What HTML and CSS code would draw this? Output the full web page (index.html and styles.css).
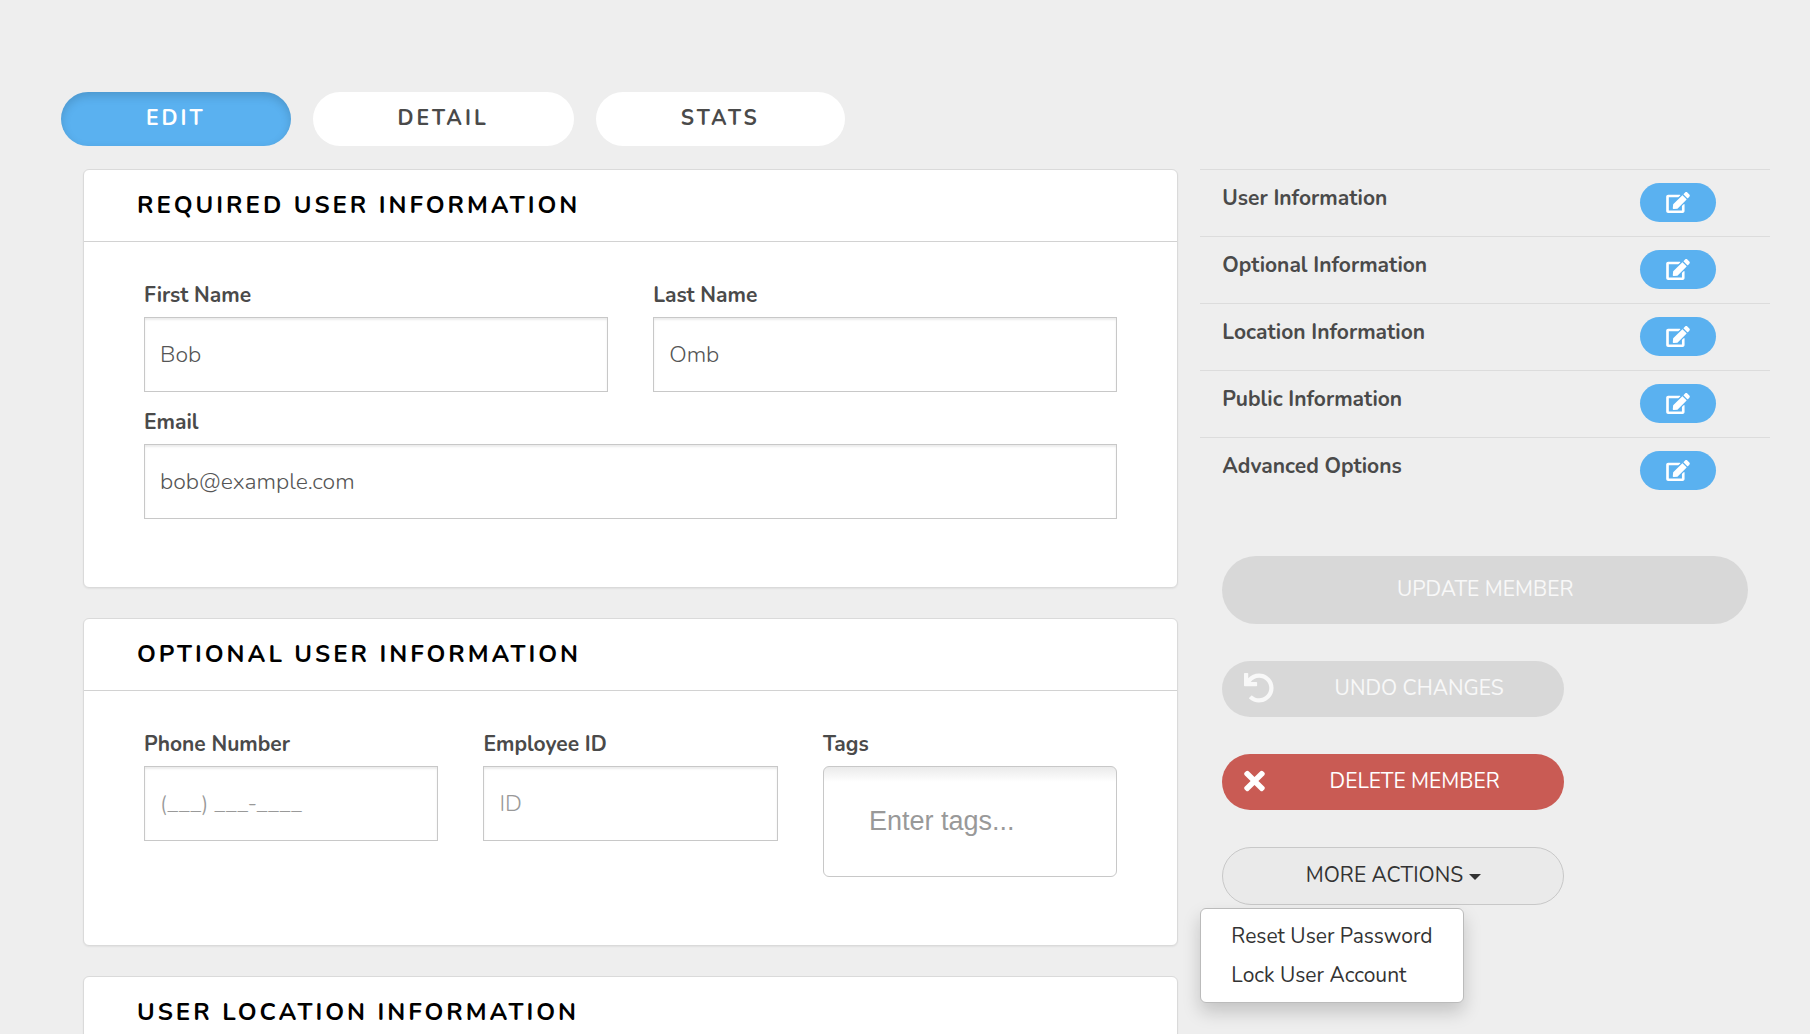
FILE: index.html
```
<!DOCTYPE html>
<html lang="en">
<head>
  <meta charset="utf-8">
  <title>Edit Member</title>
  <link rel="stylesheet" href="styles.css">
</head>
<body>
  <svg class="sprite" aria-hidden="true">
    <symbol id="icon-edit" viewBox="0 0 576 512">
      <path d="M402.6 83.2l90.2 90.2c3.8 3.8 3.8 10 0 13.8L274.4 405.6l-92.8 10.3c-12.4 1.4-22.9-9.1-21.5-21.5l10.3-92.8L388.8 83.2c3.8-3.8 10-3.8 13.8 0zm162-22.9l-48.8-48.8c-15.2-15.2-39.9-15.2-55.2 0l-35.4 35.4c-3.8 3.8-3.8 10 0 13.8l90.2 90.2c3.8 3.8 10 3.8 13.8 0l35.4-35.4c15.2-15.3 15.2-40 0-55.2zM384 346.2V448H64V128h229.8c3.2 0 6.2-1.3 8.5-3.5l40-40c7.6-7.6 2.2-20.5-8.5-20.5H48C21.5 64 0 85.5 0 112v352c0 26.5 21.5 48 48 48h352c26.5 0 48-21.5 48-48V306.2c0-10.7-12.9-16-20.5-8.5l-40 40c-2.2 2.3-3.5 5.3-3.5 8.5z"/>
    </symbol>
    <symbol id="icon-undo" viewBox="0 0 512 512">
      <path d="M212.333 224.333H12c-6.627 0-12-5.373-12-12V12C0 5.373 5.373 0 12 0h48c6.627 0 12 5.373 12 12v78.112C117.773 39.279 184.26 7.47 258.175 8.007c136.906.994 246.448 111.623 246.157 248.532C504.041 393.258 393.12 504 256.333 504c-64.089 0-122.496-24.313-166.51-64.215-5.099-4.622-5.334-12.554-.467-17.42l33.967-33.967c4.474-4.474 11.662-4.717 16.401-.525C170.76 415.336 211.58 432 256.333 432c97.268 0 176-78.716 176-176 0-97.267-78.716-176-176-176-58.496 0-110.28 28.476-142.274 72.333h98.274c6.627 0 12 5.373 12 12v48c0 6.627-5.373 12-12 12z"/>
    </symbol>
    <symbol id="icon-times" viewBox="0 0 352 512">
      <path d="M242.72 256l100.07-100.07c12.28-12.28 12.28-32.19 0-44.48l-22.24-22.24c-12.28-12.28-32.19-12.28-44.48 0L176 189.28 75.93 89.21c-12.28-12.28-32.19-12.28-44.48 0L9.21 111.45c-12.28 12.28-12.28 32.19 0 44.48L109.28 256 9.21 356.07c-12.28 12.28-12.28 32.19 0 44.48l22.24 22.24c12.28 12.28 32.2 12.28 44.48 0L176 322.72l100.07 100.07c12.28 12.28 32.2 12.28 44.48 0l22.24-22.24c12.28-12.28 12.28-32.19 0-44.48L242.72 256z"/>
    </symbol>
  </svg>

  <div class="page">
    <nav class="tabs">
      <button type="button" class="tab active">EDIT</button>
      <button type="button" class="tab">DETAIL</button>
      <button type="button" class="tab">STATS</button>
    </nav>

    <div class="columns">
      <form class="main">
        <section class="card">
          <h2 class="card-title">REQUIRED USER INFORMATION</h2>
          <div class="card-body">
            <div class="row">
              <div class="field">
                <label for="first-name">First Name</label>
                <input type="text" id="first-name" value="Bob">
              </div>
              <div class="field">
                <label for="last-name">Last Name</label>
                <input type="text" id="last-name" value="Omb">
              </div>
            </div>
            <div class="row">
              <div class="field">
                <label for="email">Email</label>
                <input type="text" id="email" value="bob@example.com">
              </div>
            </div>
          </div>
        </section>

        <section class="card">
          <h2 class="card-title">OPTIONAL USER INFORMATION</h2>
          <div class="card-body">
            <div class="row">
              <div class="field">
                <label for="phone">Phone Number</label>
                <input type="text" id="phone" placeholder="(___) ___-____">
              </div>
              <div class="field">
                <label for="employee-id">Employee ID</label>
                <input type="text" id="employee-id" placeholder="ID">
              </div>
              <div class="field">
                <label for="tags">Tags</label>
                <input type="text" id="tags" class="tags-input" placeholder="Enter tags...">
              </div>
            </div>
          </div>
        </section>

        <section class="card">
          <h2 class="card-title">USER LOCATION INFORMATION</h2>
        </section>
      </form>

      <aside class="side">
        <ul class="sections">
          <li>
            <span>User Information</span>
            <button type="button" class="edit-btn" aria-label="Edit user information"><svg><use href="#icon-edit"/></svg></button>
          </li>
          <li>
            <span>Optional Information</span>
            <button type="button" class="edit-btn" aria-label="Edit optional information"><svg><use href="#icon-edit"/></svg></button>
          </li>
          <li>
            <span>Location Information</span>
            <button type="button" class="edit-btn" aria-label="Edit location information"><svg><use href="#icon-edit"/></svg></button>
          </li>
          <li>
            <span>Public Information</span>
            <button type="button" class="edit-btn" aria-label="Edit public information"><svg><use href="#icon-edit"/></svg></button>
          </li>
          <li>
            <span>Advanced Options</span>
            <button type="button" class="edit-btn" aria-label="Edit advanced options"><svg><use href="#icon-edit"/></svg></button>
          </li>
        </ul>

        <div class="actions">
          <button type="button" class="btn btn-update" disabled>UPDATE MEMBER</button>
          <button type="button" class="btn btn-icon" disabled>
            <svg class="undo"><use href="#icon-undo"/></svg>
            <span>UNDO CHANGES</span>
          </button>
          <button type="button" class="btn btn-icon btn-danger">
            <svg class="times"><use href="#icon-times"/></svg>
            <span>DELETE MEMBER</span>
          </button>
          <button type="button" class="btn btn-more" aria-expanded="true">MORE ACTIONS <i class="caret"></i></button>
        </div>

        <div class="dropdown">
          <ul class="menu">
            <li><a href="#">Reset User Password</a></li>
            <li><a href="#">Lock User Account</a></li>
          </ul>
        </div>
      </aside>
    </div>
  </div>
</body>
</html>
```
FILE: styles.css
```
* {
  box-sizing: border-box;
}

body {
  margin: 0;
  background: #eee;
  color: #4a4a4a;
  font-family: Nunito, Lato, sans-serif;
  font-size: 21px;
  line-height: 30px;
  height: 100vh;
  overflow: hidden;
}

button,
input {
  font: inherit;
}

.sprite {
  display: none;
}

.page {
  padding: 92px 40px 0 61px;
}

.tabs {
  display: flex;
  gap: 22px;
}

.tab {
  height: 54px;
  padding: 0 85px 2px;
  border: none;
  border-radius: 27px;
  background: #fff;
  color: #4a4a4a;
  font-weight: bold;
  letter-spacing: 3px;
  cursor: pointer;
}

.tab.active {
  background: #5ab1f0;
  color: #fff;
  box-shadow: inset 0 4px 10px rgba(0,0,0,0.15);
}

.columns {
  display: grid;
  grid-template-columns: 2fr 1fr;
  margin-top: 23px;
}

.main {
  padding: 0 22px;
}

.card {
  margin-bottom: 30px;
  padding-bottom: 68px;
  background: #fff;
  border: 1px solid #dadada;
  border-radius: 6px;
  box-shadow: 0 1px 2px rgba(0,0,0,0.06);
}

.card:last-child {
  margin-bottom: 0;
  padding-bottom: 0;
}

.card-title {
  margin: 0;
  padding: 20px 53px 21px;
  border-bottom: 1px solid #d2d2d2;
  color: #000;
  font-size: 24px;
  line-height: 30px;
  letter-spacing: 3px;
}

.card-body {
  padding: 38px 60px 0;
}

.row {
  display: flex;
  align-items: flex-start;
  gap: 45px;
}

.row + .row {
  margin-top: 15px;
}

.field {
  flex: 1;
  min-width: 0;
}

.field label {
  display: block;
  padding-bottom: 7px;
  font-weight: bold;
}

.field input {
  display: block;
  width: 100%;
  height: 75px;
  padding: 0 15px;
  border: 1px solid #c8c8c8;
  background: #fff;
  box-shadow: inset 0 2px 2px rgba(0,0,0,0.08);
  color: #555;
  font-size: 23px;
  font-weight: 300;
}

.field input::placeholder {
  color: #999;
}

.field .tags-input {
  height: 111px;
  padding: 0 45px;
  border-radius: 6px;
  background: linear-gradient(#eaeaea, #fff 15px);
  box-shadow: none;
  font-family: "Liberation Sans", sans-serif;
  font-size: 27px;
}

.sections {
  margin: 0;
  padding: 0;
  list-style: none;
}

.sections li {
  display: flex;
  justify-content: space-between;
  align-items: flex-start;
  height: 67px;
  padding: 13px 54px 0 22px;
  border-top: 1px solid #dcdcdc;
  font-weight: bold;
}

.edit-btn {
  display: flex;
  justify-content: center;
  align-items: center;
  width: 76px;
  height: 39px;
  border: none;
  border-radius: 20px;
  background: #5ab1f0;
  cursor: pointer;
}

.edit-btn svg {
  width: 24px;
  height: 21px;
  fill: #fff;
}

.actions {
  display: flex;
  flex-direction: column;
  align-items: flex-start;
  gap: 37px;
  margin-top: 52px;
  padding: 0 22px;
}

.btn {
  width: 65%;
  height: 56px;
  padding: 0 0 2px;
  border: none;
  border-radius: 34px;
  color: #fff;
  cursor: pointer;
}

.btn:disabled {
  background: #d8d8d8;
  color: #f8f8f8;
  cursor: default;
}

.btn-update {
  width: 100%;
  height: 68px;
}

.btn-icon {
  display: flex;
  align-items: center;
  padding-left: 22px;
}

.btn-icon svg {
  height: 30px;
  fill: currentColor;
}

.btn-icon span {
  flex: 1;
}

.undo {
  width: 30px;
}

.times {
  width: 21px;
}

.btn-danger {
  background: #c95b54;
}

.btn-more {
  height: 58px;
  border: 1px solid #c8c8c8;
  background: #eaeaea;
  color: #333;
}

.caret {
  display: inline-block;
  vertical-align: middle;
  border-top: 6px solid #333;
  border-left: 6px solid transparent;
  border-right: 6px solid transparent;
}

/* open menu under More Actions */
.dropdown {
  position: relative;
}

.menu {
  position: absolute;
  top: 3px;
  left: 0;
  margin: 0;
  padding: 8px 0 7px;
  background: #fff;
  border: 1px solid #bbb;
  border-radius: 6px;
  box-shadow: 0 9px 18px rgba(0,0,0,0.18);
  list-style: none;
}

.menu a {
  display: block;
  padding: 4px 30px 5px;
  color: #333;
  text-decoration: none;
  white-space: nowrap;
}
```
